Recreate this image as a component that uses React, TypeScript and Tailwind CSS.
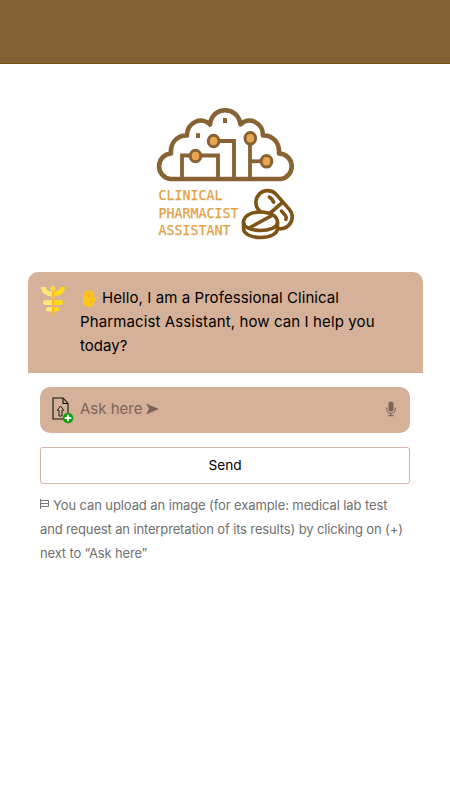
import type React from "react"

const greeting = [
  { text: "Hello, I am a Professional Clinical", spacing: "tracking-[0.08px]" },
  { text: "Pharmacist Assistant, how can I help you", spacing: "tracking-[0.11px]" },
  { text: "today?", spacing: "tracking-[0.05px]" },
]

function CloudLogo() {
  return (
    <svg width="150" height="86" viewBox="0 0 150 86" fill="none" stroke="#876232" strokeWidth="4.6" strokeLinejoin="round">
      <path d="M20.5 79A12.8 12.8 0 0 1 21 53.5C20 42 28 35 37 35.5C37 22 52 16 60 24.5C62 5.500 88 5.500 90.5 24.5C98 16 113 22 113 35.5C122 35 130 42 129 53.5A12.8 12.8 0 0 1 130.5 79Z" />
      <g strokeWidth="3.8" strokeLinejoin="miter">
        <path d="M32 79V55.5H68V79" />
        <path d="M64 41H84V79" />
        <path d="M100 38V79" />
        <path d="M100 61.3H116" />
      </g>
      <g fill="#e8a552" strokeWidth="3">
        <ellipse cx="45.5" cy="56" rx="5.3" ry="5.8" />
        <ellipse cx="63.6" cy="41" rx="5.3" ry="5.8" />
        <ellipse cx="100.3" cy="38.3" rx="5.3" ry="5.8" />
        <ellipse cx="116.5" cy="61.3" rx="5.3" ry="5.8" />
      </g>
      <path d="M73 18h4v5h-4zM46 33.3h4v4.6h-4z" fill="#876232" stroke="none" />
    </svg>
  )
}

function PillsIcon() {
  return (
    <svg width="54" height="54" viewBox="0 0 54 54" fill="none" stroke="#7d5416" strokeWidth="3.6" strokeLinecap="round" strokeLinejoin="round">
      <g transform="rotate(49 32.5 22.5)">
        <rect x="11.500" y="10.500" width="43" height="23.500" rx="11.700" />
        <path d="M33 11V33.500" />
        <path d="M20.500 17.500Q23 16.500 27 17.500" />
        <path d="M39 17.500H45Q47 17.500 48 19.500" />
      </g>
      <path d="M2.500 35.500C2.500 29 10 25 19.500 25S36.500 29 36.500 35.500V41C36.500 47 29 50.500 19.500 50.500S2.500 47 2.500 41Z" fill="#fff" />
      <path d="M2.500 35.500C2.500 40.500 11 43.500 19.500 43.500S36.500 40.500 36.500 35.500" />
      <path d="M9 40.500L30 29" />
    </svg>
  )
}

function Caduceus() {
  return (
    <svg width="26" height="32" viewBox="0 0 26 32" className="ml-px">
      <path d="M0 1H5C5 4 7 5.5 12 5.5V10.5C4 10.5 0 6 0 1ZM12 14H4.500A2.500 2.500 0 0 0 4.500 19H12ZM12 21H7A2.200 2.200 0 0 0 7 25.500H12Z" fill="#ffe477" />
      <path d="M24 1H19C19 4 17 5.5 12 5.5V10.5C20 10.5 24 6 24 1ZM12 14H19.500A2.500 2.500 0 0 1 19.500 19H12ZM12 21H16.500A2.200 2.200 0 0 1 16.500 25.500H12Z" fill="#ffd81d" />
      <path d="M12 4V29.500" stroke="#fdb72e" strokeWidth="2" strokeLinecap="round" />
      <circle cx="12" cy="2.500" r="2.400" fill="#ffd92f" />
    </svg>
  )
}

function RaisedHand() {
  return (
    <svg width="17" height="19" viewBox="0 0 17 19" className="shrink-0">
      <g stroke="#ffc51b" strokeWidth="2.5" strokeLinecap="round" fill="none">
        <path d="M4.5 11V5M7 9V2.8M9.7 9V2.2M12.3 10V4" />
        <path d="M12 14.5L15.2 9.2" />
      </g>
      <path d="M3.3 8.5H13L14.5 12.5C13.5 16.5 12 18.3 8.8 18.3C4.5 18.3 3.2 15.5 3.3 8.5Z" fill="#ffc51b" />
      <path d="M5.8 8V4.5M8.4 8V3.5M11 8.5V4.5M10.5 14.5C10.5 12.5 11.5 11.5 13 11.3" stroke="#e99b20" strokeWidth=".65" fill="none" />
    </svg>
  )
}

function UploadIcon() {
  return (
    <svg width="24" height="28" viewBox="0 0 24 28" fill="none">
      <path d="M2 2H12L17 7.5V23H2Z" stroke="#111" strokeWidth="1.1" />
      <path d="M12 2V7.5H17" stroke="#111" strokeWidth="1.1" />
      <path d="M9.5 10L12.8 14.300H11V20H8V14.300H6.200Z" stroke="#111" strokeWidth=".9" />
      <circle cx="17" cy="22" r="5.3" fill="#08a30c" />
      <path d="M17 18.700V25.300M13.700 22H20.300" stroke="#fff" strokeWidth="2" />
    </svg>
  )
}

function MicIcon() {
  return (
    <svg width="10" height="16" viewBox="0 0 10 16" fill="none">
      <rect x="2.5" y=".5" width="5" height="10" rx="2.5" fill="#7c6558" />
      <path d="M.8 6.5V8.2A4.2 4.2 0 0 0 9.2 8.2V6.5M5 12.3V14.5M2.3 14.6H7.7" stroke="#7c6558" strokeWidth="1.1" />
    </svg>
  )
}

function Line({ className, children }: { className?: string; children: React.ReactNode }) {
  return <span className={`flex h-6 items-center whitespace-nowrap ${className || ""}`}>{children}</span>
}

export default function App() {
  return (
    <div className="h-[800px] w-[450px] overflow-hidden bg-white font-['Inter',sans-serif]">
      <header className="h-16 border-b border-[#754e10] bg-[#846132]" />

      {/* Logo */}
      <div className="mx-auto mt-9 h-[145px] w-[150px]">
        <CloudLogo />
        <div className="flex h-[58px]">
          <div className="h-[54px] w-[83px] origin-left scale-x-[0.95] pt-px pl-[9px] font-['DejaVu_Sans_Mono',monospace] text-[14px] leading-[17.6px] text-[#e2a044] [-webkit-text-stroke:0.25px_#e2a044]">
            <p>CLINICAL</p>
            <p>PHARMACIST</p>
            <p>ASSISTANT</p>
          </div>
          <div className="ml-2 shrink-0 pt-px">
            <PillsIcon />
          </div>
        </div>
      </div>

      <main className="mx-auto mt-[27px] w-[396px]">
        <div className="ml-px flex h-[101px] w-[395px] rounded-t-[10px] bg-[#d6b199] pt-3.5 pl-3">
          <Caduceus />
          <div className="ml-[13px] text-[15px] text-black">
            <Line className={greeting[0].spacing}>
              <RaisedHand />
              <span className="ml-[5px]">{greeting[0].text}</span>
            </Line>
            <Line className={greeting[1].spacing}>{greeting[1].text}</Line>
            <Line className={greeting[2].spacing}>{greeting[2].text}</Line>
          </div>
        </div>

        <div className="px-[13px]">
          {/* Prompt field */}
          <div className="mt-3.5 flex h-[46px] items-center rounded-[10px] bg-[#d6b199] pr-[14px] pb-[2px] pl-[11px]">
            <span className="pt-[2px]">
              <UploadIcon />
            </span>
            <span className="ml-[5px] text-[15px] text-[#7c6558]">Ask here</span>
            <svg width="13" height="12" viewBox="0 0 13 12" className="ml-1">
              <path d="M0 .5L13 6L0 11.5L3 6Z" fill="#7c6558" />
            </svg>
            <span className="ml-auto">
              <MicIcon />
            </span>
          </div>

          <button className="mt-3.5 block h-[37px] w-full rounded-[3px] border border-[#d3b5a5] bg-white text-[13.7px] text-black">
            Send
          </button>

          <div className="mt-[10px] text-[13px] text-[#707070]">
            <Line className="tracking-[-0.1px]">
              <svg width="9" height="10" viewBox="0 0 9 10" fill="none" stroke="#777" strokeWidth="1" className="mb-1">
                <path d="M.5 0V10M.5 1.5H8.500V7.500H.5M.5 4.500H8.500" />
              </svg>
              <span className="ml-1">You can upload an image (for example: medical lab test</span>
            </Line>
            <Line className="tracking-[-0.14px]">and request an interpretation of its results) by clicking on (+)</Line>
            <Line className="tracking-[-0.15px]">next to “Ask here”</Line>
          </div>
        </div>
      </main>
    </div>
  )
}
